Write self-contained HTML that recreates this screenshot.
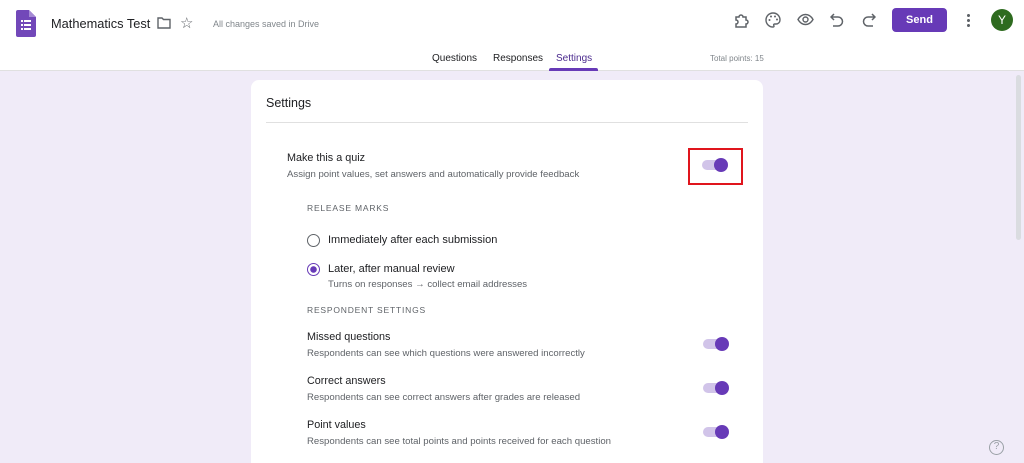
<!DOCTYPE html><html><head><style>
*{margin:0;padding:0;box-sizing:border-box}
html,body{width:1024px;height:463px;overflow:hidden}
body{background:#f0ebf8;font-family:"Liberation Sans",Arial,sans-serif;position:relative;color:#202124}
.hdr{position:absolute;left:0;top:0;width:1024px;height:71px;background:#fff;border-bottom:1px solid #e0e0e0}
.a{position:absolute}
.card{position:absolute;left:251px;top:80px;width:512px;height:383px;background:#fff;border-radius:8px 8px 0 0}
.t{position:absolute;white-space:nowrap}
.sub{font-size:9.6px;color:#5f6368}
.lab{font-size:10.8px}
.tog{position:absolute;width:24px;height:10px;border-radius:5px;background:#d1c4e9}
.tog::after{content:"";position:absolute;right:-2px;top:-2px;width:14px;height:14px;border-radius:50%;background:#673ab7}
.cap{font-size:8.5px;letter-spacing:.8px;color:#5f6368}
</style></head><body>
<div class="hdr">
<svg class="a" style="left:16px;top:10px" width="20" height="27"><path d="M2 0h11l7 7v18a2 2 0 0 1-2 2H2a2 2 0 0 1-2-2V2a2 2 0 0 1 2-2z" fill="#7248b9"/><path d="M13 0v7h7z" fill="#a58ad4"/><g fill="#fff"><rect x="5" y="10" width="2" height="2"/><rect x="8" y="10" width="7" height="2"/><rect x="5" y="14" width="2" height="2"/><rect x="8" y="14" width="7" height="2"/><rect x="5" y="18" width="2" height="2"/><rect x="8" y="18" width="7" height="2"/></g></svg>
<div class="t" style="left:51px;top:16px;font-size:12.8px;color:#202124">Mathematics Test</div>
<svg class="a" style="left:157px;top:17px" width="14" height="12"><path d="M1 1h4l1.5 1.5H13V11H1z" fill="none" stroke="#5f6368" stroke-width="1.4"/></svg>
<div class="t" style="left:180px;top:14px;font-size:15px;color:#5f6368">☆</div>
<div class="t" style="left:213px;top:19px;font-size:9px;color:#80868b">All changes saved in Drive</div>
<svg class="a" style="left:733px;top:12px" width="16" height="16"><path d="M3 5h3a2 2 0 1 1 4 0h3v3a2 2 0 1 1 0 4v3H3v-3a2 2 0 1 0 0-4z" fill="none" stroke="#5f6368" stroke-width="1.5"/></svg>
<svg class="a" style="left:765px;top:12px" width="16" height="16"><path d="M8 1a7 7 0 0 0 0 14c1 0 1.3-.8.8-1.5-.5-.7 0-1.5.8-1.5H11a4 4 0 0 0 4-4c0-4-3-7-7-7z" fill="none" stroke="#5f6368" stroke-width="1.4"/><circle cx="4.5" cy="8" r="1" fill="#5f6368"/><circle cx="6" cy="4.5" r="1" fill="#5f6368"/><circle cx="10" cy="4.5" r="1" fill="#5f6368"/><circle cx="12" cy="7.5" r="1" fill="#5f6368"/></svg>
<svg class="a" style="left:797px;top:13px" width="17" height="13"><path d="M1 6.5C3 3 5.5 1.5 8.5 1.5S14 3 16 6.5C14 10 11.5 11.5 8.5 11.5S3 10 1 6.5z" fill="none" stroke="#5f6368" stroke-width="1.4"/><circle cx="8.5" cy="6.5" r="2.5" fill="none" stroke="#5f6368" stroke-width="1.4"/></svg>
<svg class="a" style="left:830px;top:12px" width="14" height="16"><path d="M4 2L1 5l3 3M1 5h7a4.5 4.5 0 0 1 0 9H3" fill="none" stroke="#5f6368" stroke-width="1.5"/></svg>
<svg class="a" style="left:862px;top:12px" width="14" height="16"><path d="M10 2l3 3-3 3M13 5H6a4.5 4.5 0 0 0 0 9h5" fill="none" stroke="#5f6368" stroke-width="1.5"/></svg>
<div class="a" style="left:892px;top:8px;width:55px;height:24px;background:#673ab7;border-radius:4px;color:#fff;font-size:11px;font-weight:bold;text-align:center;line-height:24px">Send</div>
<div class="a" style="left:967px;top:13px;width:3px;height:14px;background:radial-gradient(circle,#5f6368 1.4px,transparent 1.6px) 0 0/3px 5px"></div>
<div class="a" style="left:991px;top:9px;width:22px;height:22px;border-radius:50%;background:#2e6b1f;color:#fff;font-size:12px;text-align:center;line-height:22px">Y</div>
<div class="t" style="left:432px;top:53px;font-size:10px">Questions</div>
<div class="t" style="left:493px;top:53px;font-size:10px">Responses</div>
<div class="t" style="left:556px;top:53px;font-size:10px;color:#4b2a8e">Settings</div>
<div class="a" style="left:549px;top:68px;width:49px;height:3px;background:#673ab7;border-radius:2px 2px 0 0"></div>
<div class="t" style="left:710px;top:54px;font-size:8px;color:#80868b">Total points: 15</div>
</div>
<div class="a" style="left:1016px;top:75px;width:5px;height:165px;background:#dadce0;border-radius:3px"></div>
<div class="card">
<div class="t" style="left:15px;top:16px;font-size:12.5px">Settings</div>
<div class="a" style="left:15px;top:42px;width:482px;height:1px;background:#e0e0e0"></div>
<div class="t lab" style="left:36px;top:72px">Make this a quiz</div>
<div class="t sub" style="left:36px;top:89px">Assign point values, set answers and automatically provide feedback</div>
<div class="tog" style="left:451px;top:80px"></div>
<div class="a" style="left:437px;top:68px;width:55px;height:37px;border:2px solid #e0151d"></div>
<div class="t cap" style="left:56px;top:123px">RELEASE MARKS</div>
<div class="a" style="left:56px;top:154px;width:13px;height:13px;border-radius:50%;border:1.5px solid #5f6368"></div>
<div class="t" style="left:77px;top:154px;font-size:11px">Immediately after each submission</div>
<div class="a" style="left:56px;top:183px;width:13px;height:13px;border-radius:50%;border:1.5px solid #673ab7;background:radial-gradient(circle,#673ab7 3px,#fff 3.5px)"></div>
<div class="t" style="left:77px;top:183px;font-size:11px">Later, after manual review</div>
<div class="t sub" style="left:77px;top:199px">Turns on responses → collect email addresses</div>
<div class="t cap" style="left:56px;top:225px">RESPONDENT SETTINGS</div>
<div class="t lab" style="left:56px;top:251px">Missed questions</div>
<div class="t sub" style="left:56px;top:268px">Respondents can see which questions were answered incorrectly</div>
<div class="tog" style="left:452px;top:259px"></div>
<div class="t lab" style="left:56px;top:295px">Correct answers</div>
<div class="t sub" style="left:56px;top:312px">Respondents can see correct answers after grades are released</div>
<div class="tog" style="left:452px;top:303px"></div>
<div class="t lab" style="left:56px;top:339px">Point values</div>
<div class="t sub" style="left:56px;top:356px">Respondents can see total points and points received for each question</div>
<div class="tog" style="left:452px;top:347px"></div>
</div>
<div class="a" style="left:989px;top:440px;width:15px;height:15px;border-radius:50%;border:1.5px solid #9aa0a6;color:#9aa0a6;font-size:10px;text-align:center;line-height:12px">?</div>
</body></html>
